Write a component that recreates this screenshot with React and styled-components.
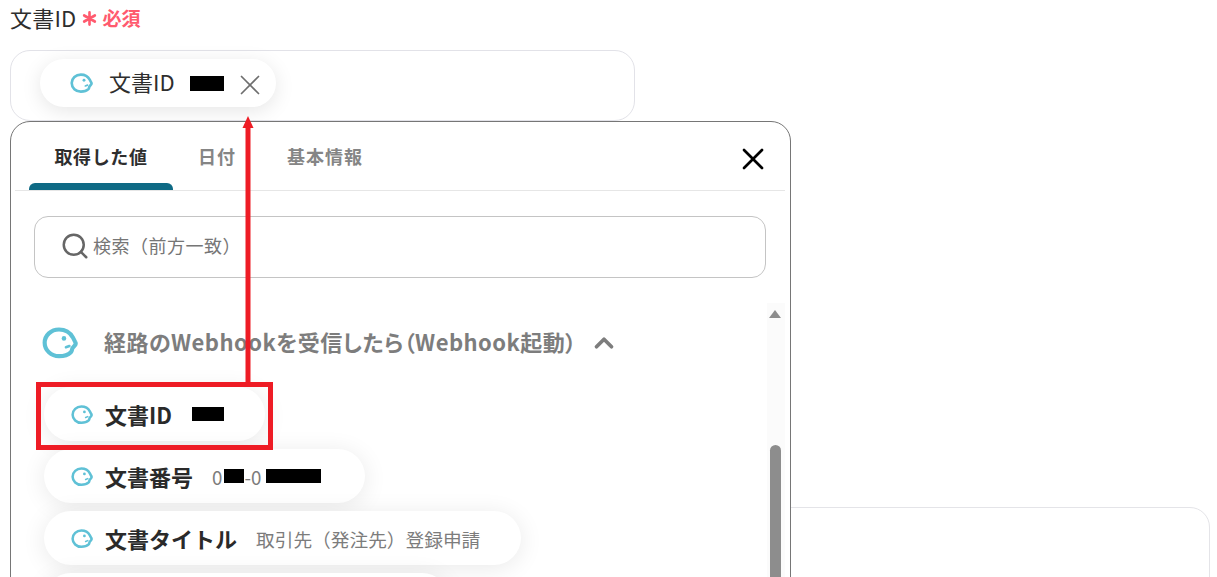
import React from "react";
import styled, { createGlobalStyle } from "styled-components";
import { X, Search, ChevronUp } from "lucide-react";

const Global = createGlobalStyle`
  html, body { margin: 0; padding: 0; background: #fff; }
  body { width: 1217px; height: 577px; overflow: hidden; font-family: "Noto Sans CJK JP", "Noto Sans", sans-serif; color: #2e2e2e; }
`;

const Page = styled.div`
  position: relative;
  width: 1217px;
  height: 577px;
  overflow: hidden;
  padding: 3px 7px 0 10px;
  box-sizing: border-box;
`;
const LabelRow = styled.div`
  display: flex;
  align-items: center;
  height: 30px;
  gap: 6px;
  margin-bottom: 17px;
`;
const LabelText = styled.span`
  font-size: 22px;
  line-height: 30px;
  letter-spacing: 0.2px;
  margin-bottom: 2px;
`;
const Required = styled.span`
  display: flex;
  align-items: center;
  gap: 5px;
  color: #ff5a6e;
  font-size: 19px;
  font-weight: 700;
  line-height: 30px;
`;
const Field = styled.div`
  width: 625px;
  height: 71px;
  box-sizing: border-box;
  border: 1px solid #e2e2e8;
  border-radius: 20px;
  padding: 8px 0 0 29px;
  background: #fff;
`;
const ValuePill = styled.div`
  display: inline-flex;
  align-items: center;
  width: 236px;
  height: 48px;
  box-sizing: border-box;
  padding-left: 30px;
  border-radius: 24px;
  background: #fff;
  box-shadow: 0 4px 20px rgba(0, 0, 0, 0.1);
`;
const ValueName = styled.span`
  margin: 0 0 4px 16px;
  font-size: 22px;
  line-height: 30px;
`;
const Redact = styled.span`
  display: inline-block;
  flex: none;
  width: ${(p) => p.$w}px;
  height: ${(p) => p.$h || 15}px;
  margin-left: ${(p) => p.$ml || 0}px;
  background: #000;
`;
const RemoveBtn = styled.span`
  display: flex;
  margin: 3px 0 0 9px;
  color: #6e6e6e;
`;
const LowerCard = styled.div`
  width: 1200px;
  height: 200px;
  margin-top: 386px;
  box-sizing: border-box;
  border: 1px solid #e4e4e8;
  border-radius: 20px;
  background: #fff;
`;
const Panel = styled.div`
  position: absolute;
  left: 10px;
  top: 121px;
  width: 781px;
  height: 520px;
  box-sizing: border-box;
  border: 1px solid #767676;
  border-radius: 20px;
  background: #fff;
  padding: 0 5px 0 4px;
`;
const TabBar = styled.div`
  display: flex;
  align-items: flex-end;
  height: 68px;
  border-bottom: 1px solid #e6e6e6;
  padding-left: 14px;
  position: relative;
`;
const Tab = styled.div`
  position: relative;
  width: ${(p) => p.$w}px;
  height: 68px;
  text-align: center;
  font-size: 18px;
  font-weight: 700;
  line-height: 68px;
  letter-spacing: ${(p) => (p.$active ? "0.6px" : "1px")};
  color: ${(p) => (p.$active ? "#2e2e2e" : "#858585")};
  ${(p) =>
    p.$active &&
    `&::after {
      content: "";
      position: absolute;
      left: 0; right: 0; bottom: 0;
      height: 7px;
      background: #0e6a85;
      border-radius: 6px 6px 0 0;
    }`}
`;
const ClosePanel = styled.span`
  position: absolute;
  right: 14px;
  top: 19px;
  display: flex;
  color: #000;
`;
const SearchBox = styled.div`
  display: flex;
  align-items: center;
  gap: 3px;
  width: 732px;
  height: 62px;
  box-sizing: border-box;
  margin: 25px 0 0 19px;
  padding: 0 0 2px 25px;
  border: 1px solid #c4c4c4;
  border-radius: 14px;
  color: #666;
`;
const Placeholder = styled.span`
  font-size: 18px;
  color: #767676;
  letter-spacing: 0.5px;
  position: relative;
  top: -1px;
`;
const ListArea = styled.div`
  position: relative;
  margin-top: 25px;
  padding-left: 29px;
`;
const Scrollbar = styled.div`
  position: absolute;
  top: 0;
  right: 0;
  width: 18px;
  height: 300px;
  background: #fbfbfb;
`;
const ScrollUp = styled.span`
  position: absolute;
  left: 2px;
  top: 7px;
  width: 0;
  height: 0;
  border-left: 6.5px solid transparent;
  border-right: 6.5px solid transparent;
  border-bottom: 8px solid #8d8d8d;
`;
const ScrollThumb = styled.span`
  position: absolute;
  left: 3px;
  top: 142px;
  width: 11px;
  height: 200px;
  border-radius: 6px 6px 0 0;
  background: #8d8d8d;
`;
const SectionHead = styled.div`
  display: flex;
  align-items: center;
  height: 84px;
  box-sizing: border-box;
  padding-bottom: 4px;
  margin-left: -2px;
  white-space: nowrap;
`;
const SectionIcon = styled.span`
  display: flex;
  flex: none;
`;
const SectionTitle = styled.span`
  margin: 0 0 4px 26px;
  font-size: 22px;
  font-weight: 700;
  color: #7d7d7d;
  line-height: 30px;
  font-feature-settings: "palt";
  letter-spacing: 0.45px;
`;
const Chevron = styled.span`
  display: flex;
  margin-left: 12px;
  color: #7d7d7d;
`;
const Items = styled.div`
  display: flex;
  flex-direction: column;
  align-items: flex-start;
  gap: 8px;
`;
const Item = styled.div`
  display: flex;
  align-items: center;
  width: ${(p) => p.$w}px;
  height: 54px;
  flex: none;
  box-sizing: border-box;
  padding-left: 27px;
  border-radius: 27px;
  background: #fff;
  box-shadow: 0 3px 24px rgba(0, 0, 0, 0.09);
  white-space: nowrap;
`;
const ItemIcon = styled.span`
  display: flex;
  flex: none;
  margin-top: 2px;
`;
const ItemName = styled.span`
  margin-left: 12px;
  font-size: 22px;
  font-weight: 700;
  line-height: 30px;
  color: #2a2a2a;
`;
const ItemValue = styled.span`
  display: inline-flex;
  align-items: center;
  margin-left: ${(p) => p.$ml || 19}px;
  font-size: 18.700px;
  color: #7c7c7c;
`;
const Annotation = styled.div`
  position: absolute;
  left: 36px;
  top: 382px;
  width: 237px;
  height: 68px;
  box-sizing: border-box;
  border: 5px solid #ee1c25;
`;
const ArrowSvg = styled.svg`
  position: absolute;
  left: 240px;
  top: 114px;
`;

const Bot = ({ size = 22 }) => (
  <svg width={size} height={size * 0.88} viewBox="0 0 36 32" fill="none" style={{ flex: "none" }}>
    <path
      d="M17 2.500C9 2.500 2.500 8.500 2.500 16S9 29.500 17 29.500c5 0 9.500-1.500 12-4 1-1.200 1.200-2.500 1.500-4l2.500-3c1-1.200 1-2.500.3-3.500l-2.300-4.500C28.500 6 24 2.500 17 2.500Z"
      stroke="#5fc1d6"
      strokeWidth="4.200"
      strokeLinejoin="round"
    />
    <circle cx="22" cy="11.500" r="2.300" fill="#5fc1d6" />
    <path d="M24 20.500l3.500-1.300" stroke="#5fc1d6" strokeWidth="2.600" strokeLinecap="round" />
  </svg>
);

export default function App() {
  return (
    <>
      <Global />
      <Page>
        <LabelRow>
          <LabelText>文書ID</LabelText>
          <Required>
            <svg width="15" height="15" viewBox="0 0 16 16" stroke="#ff5a6e" strokeWidth="2.800" strokeLinecap="round">
              <path d="M8 1.500v13M2.300 4.800l11.400 6.400M13.700 4.800 2.300 11.200" />
            </svg>
            必須
          </Required>
        </LabelRow>
        <Field>
          <ValuePill>
            <Bot size={23} />
            <ValueName>文書ID</ValueName>
            <Redact $w={34} $ml={15} />
            <RemoveBtn>
              <X size={34} strokeWidth={1.200} />
            </RemoveBtn>
          </ValuePill>
        </Field>
        <LowerCard />
        <Panel>
          <TabBar>
            <Tab $w={144} $active>取得した値</Tab>
            <Tab $w={88}>日付</Tab>
            <Tab $w={128}>基本情報</Tab>
            <ClosePanel>
              <X size={36} strokeWidth={1.800} />
            </ClosePanel>
          </TabBar>
          <SearchBox>
            <Search size={30} strokeWidth={2} />
            <Placeholder>検索（前方一致）</Placeholder>
          </SearchBox>
          <ListArea>
            <Scrollbar>
              <ScrollUp />
              <ScrollThumb />
            </Scrollbar>
            <SectionHead>
              <SectionIcon>
                <Bot size={36} />
              </SectionIcon>
              <SectionTitle>経路のWebhookを受信したら（Webhook起動）</SectionTitle>
              <Chevron>
                <ChevronUp size={30} strokeWidth={3} />
              </Chevron>
            </SectionHead>
            <Items>
              <Item $w={221}>
                <ItemIcon><Bot /></ItemIcon>
                <ItemName>文書ID</ItemName>
                <Redact $w={32} $h={14} $ml={20} />
              </Item>
              <Item $w={321}>
                <ItemIcon><Bot /></ItemIcon>
                <ItemName>文書番号</ItemName>
                <ItemValue>
                  0<Redact $w={20} $h={14} $ml={2} />-0<Redact $w={55} $h={14} $ml={5} />
                </ItemValue>
              </Item>
              <Item $w={477}>
                <ItemIcon><Bot /></ItemIcon>
                <ItemName>文書タイトル</ItemName>
                <ItemValue>取引先（発注先）登録申請</ItemValue>
              </Item>
              <Item $w={405} />
            </Items>
          </ListArea>
        </Panel>
        <Annotation />
        <ArrowSvg width="18" height="270" viewBox="0 0 18 270">
          <path d="M5.500 12h5v258h-5z" fill="#ee1c25" />
          <path d="M8 2l5.500 12h-11z" fill="#ee1c25" />
        </ArrowSvg>
      </Page>
    </>
  );
}
